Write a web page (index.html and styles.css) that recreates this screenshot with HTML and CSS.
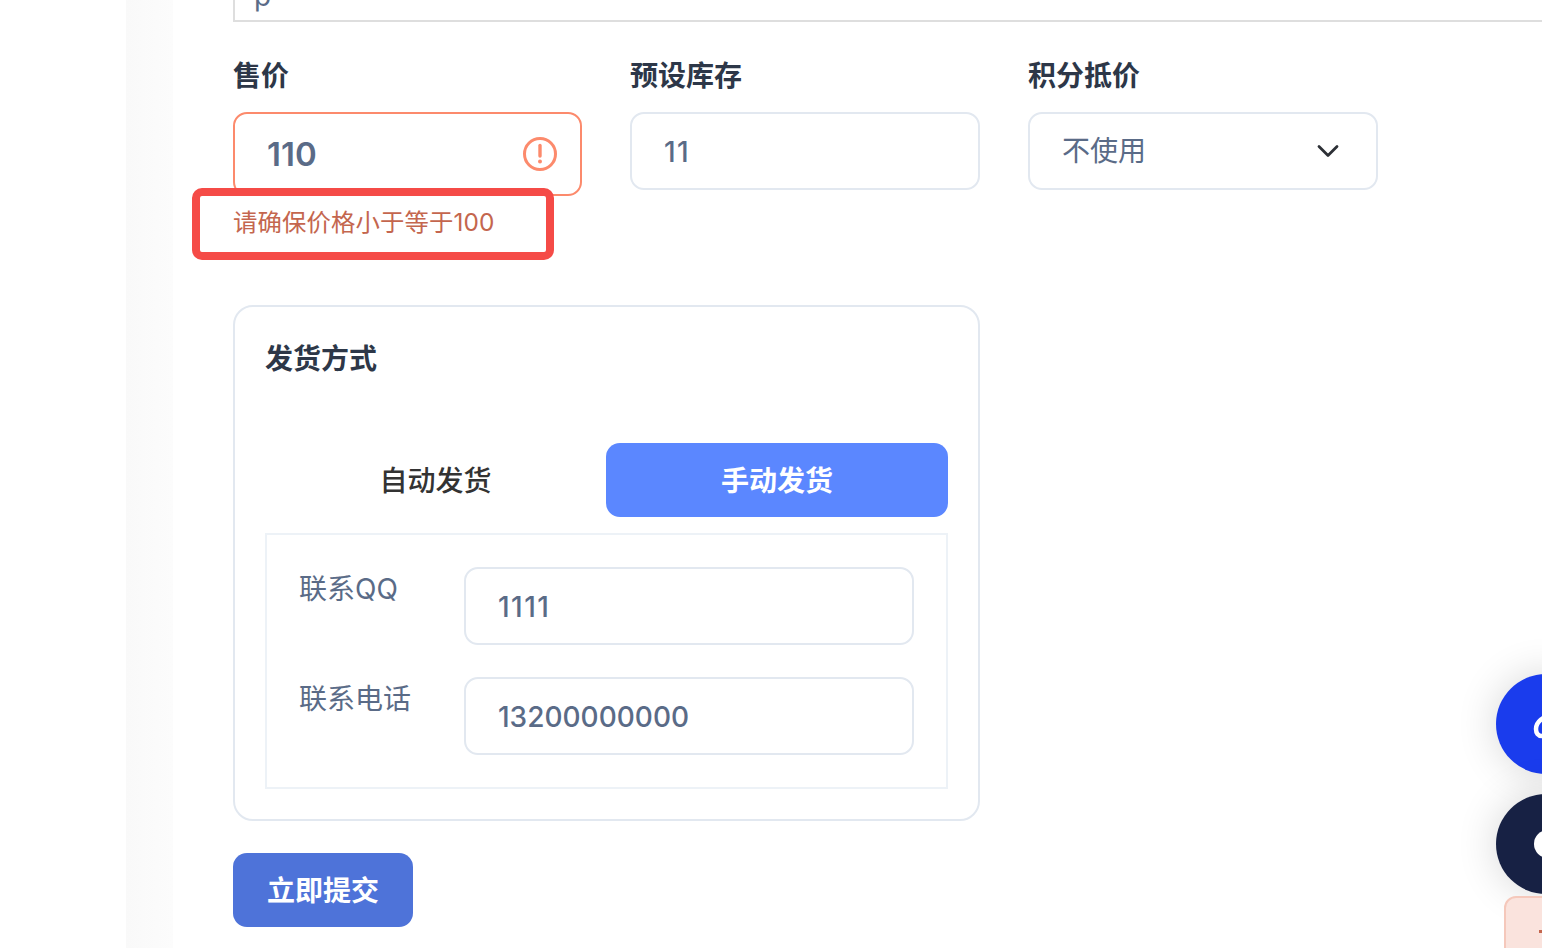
FILE: index.html
```html
<!DOCTYPE html>
<html lang="zh-CN">
<head>
<meta charset="utf-8">
<title>发货方式</title>
<link rel="stylesheet" href="styles.css">
</head>
<body>
<div class="page">
  <div class="side-gap"></div>
  <div class="side-strip"></div>
  <main class="main">
    <div class="top-input">p</div>
    <div class="fields">
      <div class="field">
        <div class="label">售价</div>
        <div class="input input-error">
          <span class="value-error">110</span>
          <svg class="error-icon" width="36" height="36" viewBox="0 0 36 36"><circle cx="18" cy="18" r="15.5" fill="none" stroke="#fc8a6c" stroke-width="3"/><path d="M18 9.500v10.500" fill="none" stroke="#fc8a6c" stroke-width="3.400" stroke-linecap="round"/><circle cx="18" cy="25.500" r="2" fill="#fc8a6c"/></svg>
        </div>
        <div class="error-text">请确保价格小于等于100</div>
        <div class="annotation"></div>
      </div>
      <div class="field">
        <div class="label">预设库存</div>
        <div class="input"><span class="value value-ones">11</span></div>
      </div>
      <div class="field">
        <div class="label">积分抵价</div>
        <div class="input select">
          <span class="select-text">不使用</span>
          <svg width="24" height="16" viewBox="0 0 24 16"><path d="M3 3.500l9 9 9-9" fill="none" stroke="#2d3036" stroke-width="2.800" stroke-linecap="round" stroke-linejoin="round"/></svg>
        </div>
      </div>
    </div>
    <section class="card">
      <h2 class="card-title">发货方式</h2>
      <div class="tabs">
        <div class="tab">自动发货</div>
        <div class="tab tab-active">手动发货</div>
      </div>
      <div class="contact">
        <div class="row">
          <div class="row-label">联系QQ</div>
          <div class="input row-input"><span class="value value-ones">1111</span></div>
        </div>
        <div class="row">
          <div class="row-label">联系电话</div>
          <div class="input row-input"><span class="value">13200000000</span></div>
        </div>
      </div>
    </section>
    <button class="submit"><span class="submit-text">立即提交</span></button>
  </main>
</div>
<div class="fab fab-blue">
  <svg width="46" height="46" viewBox="0 0 46 46"><path d="M3 25c0-7 7-13 17-14 1 10-3 21-11 21-4 0-6-3-6-7z" fill="none" stroke="#fff" stroke-width="4.500"/></svg>
</div>
<div class="fab fab-dark"><span class="fab-dot"></span></div>
<div class="pink-tag"><span class="pink-mark"></span></div>
</body>
</html>
```
FILE: styles.css
```css
* { box-sizing: border-box; }
html, body { margin: 0; height: 948px; overflow: hidden; background: #fff; }
body { font-family: Inter, "Noto Sans CJK SC", sans-serif; }
.page { display: flex; height: 948px; overflow: hidden; }
.side-gap { width: 126px; flex: none; }
.side-strip { width: 47px; flex: none; background: linear-gradient(90deg, #f9f9f9, #fcfcfc); }
.main { flex: 1; min-width: 0; padding-left: 60px; }
.top-input {
  height: 40px; margin-top: -18px; margin-right: -40px; padding-left: 19px;
  border: 2px solid #dedede; color: #5a6b87; font-size: 28px; line-height: 24px;
}
.fields { display: grid; grid-template-columns: 349px 350px 350px; column-gap: 48px; height: 247px; margin-top: 36px; }
.field { position: relative; }
.label { font-size: 28px; font-weight: 700; line-height: 36px; color: #2d3748; margin-bottom: 18px; }
.input {
  display: flex; align-items: center; height: 78px; padding: 0 32px;
  background: #fff; border: 2px solid #e2e8f0; border-radius: 14px;
}
.input-error { height: 84px; border-color: #fc8a6c; justify-content: space-between; padding-right: 22px; }
.value { font-size: 28px; font-weight: 500; color: #5a6b87; padding-top: 2px; }
.value-ones { letter-spacing: 1.500px; }
.value-error { font-size: 33px; font-weight: 600; color: #5a6b87; }
.select { justify-content: space-between; padding-right: 36px; }
.select-text { font-size: 28px; color: #5a6b87; padding-bottom: 4px; }
.error-text { margin-top: 9px; font-size: 24.400px; letter-spacing: .1px; line-height: 34px; color: #c4664e; white-space: nowrap; }
.annotation {
  position: absolute; left: -41px; top: 130px; width: 362px; height: 72px;
  border: 8px solid #f54b47; border-radius: 10px;
}
.card {
  width: 747px; height: 516px; padding: 0 30px;
  border: 2px solid #e2e8f0; border-radius: 20px; background: #fff;
}
.card-title { margin: 34px 0 0; font-size: 28px; font-weight: 700; line-height: 36px; color: #2d3748; }
.tabs { display: grid; grid-template-columns: 341px 342px; margin-top: 66px; height: 74px; }
.tab { display: flex; align-items: center; justify-content: center; padding-bottom: 2px; font-size: 28px; font-weight: 500; color: #333; border-radius: 14px; }
.tab-active { background: #5b87ff; color: #fff; font-weight: 600; }
.contact { margin-top: 16px; height: 256px; border: 2px solid #edf2f7; padding: 32px 32px 0; display: flex; flex-direction: column; gap: 32px; }
.row { display: flex; }
.row-label { width: 165px; flex: none; font-size: 28px; line-height: 40px; color: #5a6b87; padding-top: 2px; }
.row-input { width: 450px; }
.submit {
  display: block; width: 180px; height: 74px; margin-top: 32px; padding: 0 0 2px; border: 0; border-radius: 14px;
  background: #4e73d9; color: #fff; font: 700 28px Inter, "Noto Sans CJK SC", sans-serif;
}
.fab {
  position: absolute; left: 1496px; width: 100px; height: 100px; border-radius: 50%;
  box-shadow: 0 0 40px rgba(0, 0, 0, .16); overflow: hidden;
}
.fab-blue { top: 674px; background: #1a3ced; }
.fab-blue svg { position: absolute; left: 37px; top: 30px; }
.fab-dark { top: 794px; background: #172144; }
.fab-dot { position: absolute; left: 38px; top: 36px; width: 28px; height: 28px; border-radius: 50%; background: #fff; }
.pink-tag {
  position: absolute; left: 1504px; top: 896px; width: 80px; height: 80px;
  background: #fae3dd; border: 2px solid #f5c8bb; border-radius: 12px;
}
.pink-mark { position: absolute; left: 33px; top: 32px; width: 10px; height: 3px; background: #c4664e; }
```
